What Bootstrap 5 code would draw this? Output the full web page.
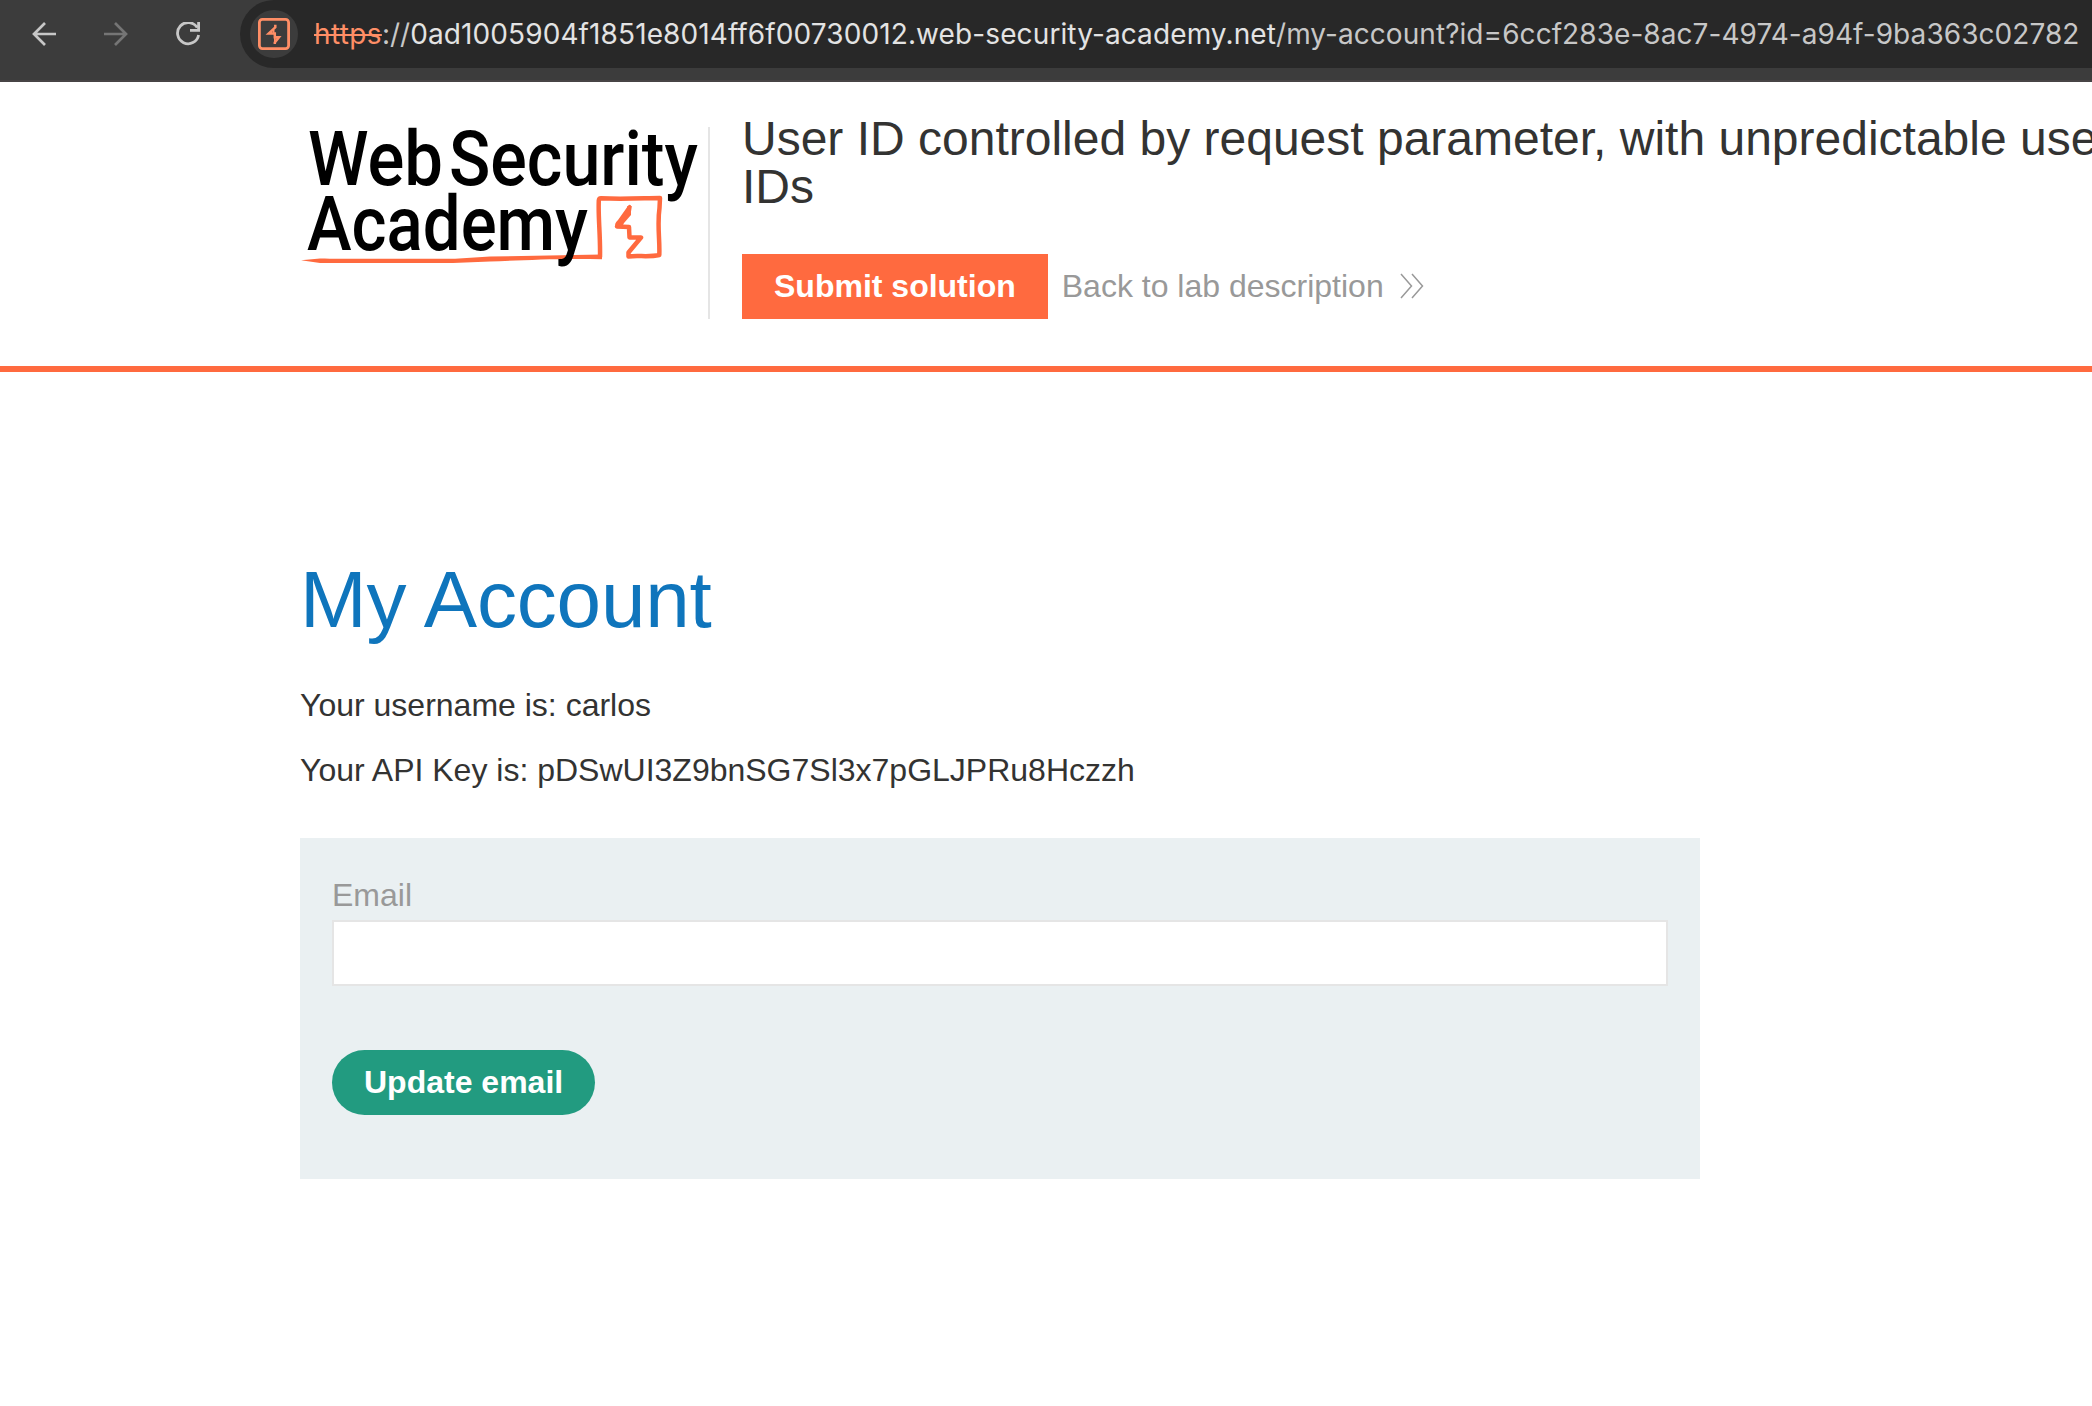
<!DOCTYPE html>
<html lang="en">
<head>
<meta charset="utf-8">
<title>User ID controlled by request parameter, with unpredictable user IDs</title>
<link href="https://cdn.jsdelivr.net/npm/bootstrap@5.3.0/dist/css/bootstrap.min.css" rel="stylesheet">
<style>
body{font-family:"Liberation Sans",Arial,sans-serif;font-size:32px;color:#333332;background:#fff;overflow:hidden;height:1406px}
.browser-bar{height:82px;background:#3c3c3c;border-bottom:2px solid #474445;padding-left:32px}
.nav-icons{height:68px;width:208px;gap:48px}
.nav-icons svg{flex:none}
.address{height:68px;background:#282828;border-radius:34px 0 0 34px;padding-left:10px;font-family:Inter,sans-serif;font-size:28px;white-space:nowrap;color:#c7c7c7}
.site-chip{width:48px;height:48px;background:#3c3c3c;margin-right:16px}
.url-scheme{color:#ff8e66;text-decoration:line-through;text-decoration-thickness:2px;letter-spacing:.35px}
.url-host{color:#e3e3e3;letter-spacing:.11px}
.url-path{letter-spacing:.06px}
.lab-header{height:290px;border-bottom:6px solid #ff6a3f;padding-left:300px}
.logo-box{width:410px;height:192px;margin-top:45px;border-right:2px solid #e5e5e5}
.logo-box svg{overflow:visible;display:block}
.lab-info{margin-left:32px;padding-top:33px}
.lab-title{font-size:48px;line-height:48px;margin-bottom:43px;white-space:nowrap;font-weight:400}
.btn-lab{height:65px;border:0;border-radius:0;background:#ff6a3f;color:#fff;font-size:32px;font-weight:700;line-height:65px;padding:0 32px}
.btn-lab:hover{background:#ff6a3f;color:#fff}
.btn-update,.btn-update:hover{background:#229b80;border-radius:33px}
.back-link{color:#999;font-size:32px;line-height:65px;margin-left:14px;text-decoration:none}
.back-link svg{margin-top:-2px}
.account{width:1400px;margin-left:300px;padding-top:180px}
.account h1{font-size:80px;line-height:96px;color:#0f75bc;margin-bottom:25px;font-weight:400;letter-spacing:-.2px}
.account p{line-height:65px;margin:0}
.email-form{margin-top:35px;height:341px;background:#eaf0f2;padding:33px 32px}
.email-form label{color:#999;line-height:49px;display:block}
.email-form .form-control{height:66px;border:2px solid #e5e5e5;border-radius:0;margin-bottom:64px;font-size:32px}
</style>
<script src="https://cdn.jsdelivr.net/npm/bootstrap@5.3.0/dist/js/bootstrap.bundle.min.js"></script>
</head>
<body>
<nav class="browser-bar d-flex align-items-start">
  <div class="nav-icons d-flex align-items-center flex-shrink-0">
    <svg width="24" height="24" viewBox="0 0 24 24" fill="none" stroke="#c7c7c7" stroke-width="2.7"><path d="M24 12H2M13 1L2 12l11 11"/></svg>
    <svg width="24" height="24" viewBox="0 0 24 24" fill="none" stroke="#757575" stroke-width="2.7"><path d="M0 12h22M11 1l11 11-11 11"/></svg>
    <svg width="24" height="24" viewBox="0 0 24 24" fill="none" stroke="#c7c7c7" stroke-width="2.8"><path d="M21.2 5.6A10.6 10.6 0 1 0 22.6 13M22.6 0v8.3H14"/></svg>
  </div>
  <div class="address d-flex align-items-center flex-grow-1">
    <span class="site-chip rounded-circle d-flex align-items-center justify-content-center flex-shrink-0">
      <svg width="32" height="32" viewBox="0 0 32 32"><rect x="1.4" y="1.4" width="29.2" height="29.200" rx="3" fill="none" stroke="#ff8e66" stroke-width="2.800"/><path d="M17.300 6.800V9.300L10.700 15.500H16.800V19.200H21L16.800 24.500V26" fill="none" stroke="#ff8e66" stroke-width="2.500"/><path d="M15.600 12v4M16.900 19v6" stroke="#ff8e66" stroke-width="1.800"/></svg>
    </span>
    <span><span class="url-scheme">https</span><span>://</span><span class="url-host">0ad1005904f1851e8014ff6f00730012.web-security-academy.net</span><span class="url-path">/my-account?id=6ccf283e-8ac7-4974-a94f-9ba363c02782</span></span>
  </div>
</nav>

<header class="lab-header d-flex align-items-start">
  <div class="logo-box flex-shrink-0">
    <svg width="408" height="192" viewBox="300 127 408 192" font-family="Roboto, sans-serif" font-weight="500" font-size="76">
      <path d="M301 260.300L320 258.500C355 259.300 420 258.500 455 258.700L490 256.500L602 254.500V259.300C560 258 520 260.500 490 261.500L453 263H320z" fill="#ff6a3f"/>
      <path d="M600 257.300C600.500 235 598 217 598.800 200.500Q599 198.300 601 198.300C622 199.300 640 198.300 660 198L659.500 208C657 225 660 240 659.300 255C648 257.500 638 255 628.500 256.500L628.500 252.500L641 237.500H629.500L629 227L617 226.500C620 221 630 215 629.500 206" fill="none" stroke="#ff6a3f" stroke-width="4.500" stroke-linejoin="round"/>
      <path d="M628.300 205.500Q629.500 203.800 631 205.500V215L624 223L622 227H616Q613.500 224 618 220z" fill="#ff6a3f"/>
      <text x="308" y="184.500" textLength="135" lengthAdjust="spacingAndGlyphs">Web</text>
      <text x="449" y="184.500" textLength="249" lengthAdjust="spacingAndGlyphs">Security</text>
      <text x="307" y="249.500" textLength="281" lengthAdjust="spacingAndGlyphs">Academy</text>
    </svg>
  </div>
  <div class="lab-info">
    <h2 class="lab-title">User ID controlled by request parameter, with unpredictable user<br>IDs</h2>
    <div class="d-flex align-items-center">
      <button class="btn btn-lab">Submit solution</button>
      <a class="back-link d-flex align-items-center" href="#"><span>Back to lab description</span>
        <svg class="ms-3" width="24" height="26" viewBox="0 0 24 26" fill="none" stroke="#999" stroke-width="1.500"><path d="M1 1l10.500 12L1 25M12 1l10.500 12L12 25"/></svg>
      </a>
    </div>
  </div>
</header>

<main class="account">
  <h1>My Account</h1>
  <p>Your username is: carlos</p>
  <p>Your API Key is: pDSwUI3Z9bnSG7Sl3x7pGLJPRu8Hczzh</p>
  <form class="email-form">
    <label for="email">Email</label>
    <input class="form-control" id="email" type="email">
    <button class="btn btn-lab btn-update" type="button">Update email</button>
  </form>
</main>
</body>
</html>
